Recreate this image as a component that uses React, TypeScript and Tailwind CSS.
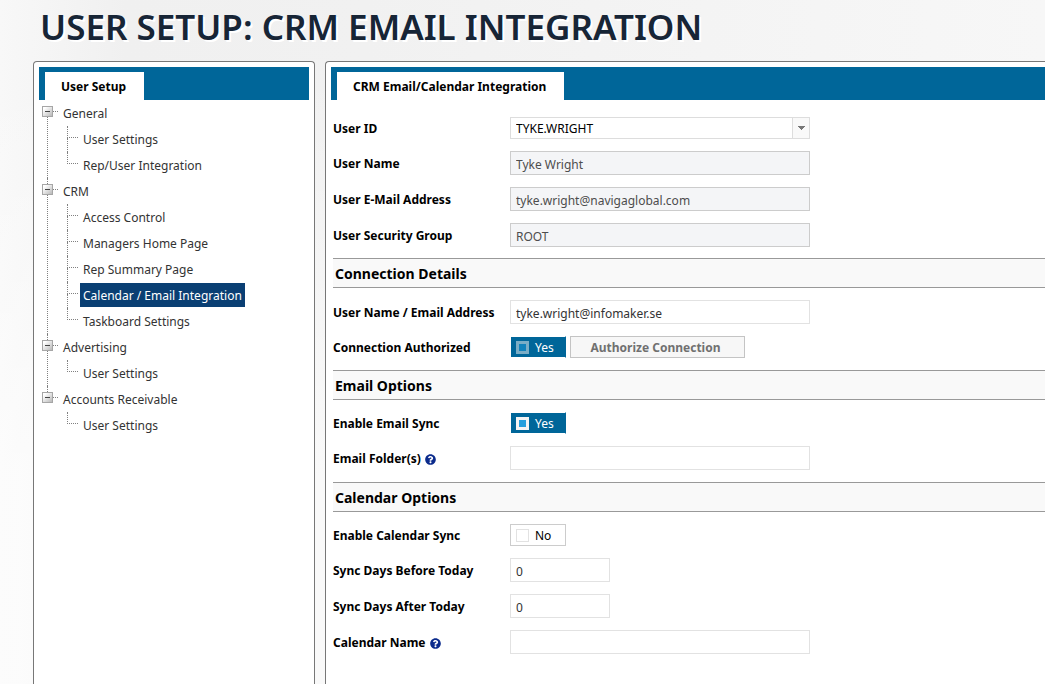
import { useId, useState } from "react";
import type { ReactNode } from "react";
import { FaQuestionCircle } from "react-icons/fa";

type TreeGroup = { label: string; items: string[] };

const GROUPS: TreeGroup[] = [
  { label: "General", items: ["User Settings", "Rep/User Integration"] },
  {
    label: "CRM",
    items: [
      "Access Control",
      "Managers Home Page",
      "Rep Summary Page",
      "Calendar / Email Integration",
      "Taskboard Settings",
    ],
  },
  { label: "Advertising", items: ["User Settings"] },
  { label: "Accounts Receivable", items: ["User Settings"] },
];

const ACTIVE_ITEM = "Calendar / Email Integration";

function TabBar({ title }: { title: string }) {
  return (
    <div className="flex h-[33px] bg-[#006699] pt-[5px] pl-1.5">
      <h2 className="flex items-center bg-white pt-0.5 pr-[18px] pl-4 text-xs font-bold text-black">{title}</h2>
    </div>
  );
}

function ToggleIcon({ open }: { open: boolean }) {
  return (
    <svg viewBox="0 0 11 11" className="block size-[11px]" shapeRendering="crispEdges" aria-hidden="true">
      <defs>
        <linearGradient id="node-face" x1="0" y1="0" x2="1" y2="1">
          <stop offset="0.2" stopColor="#ffffff" />
          <stop offset="1" stopColor="#b4b4b4" />
        </linearGradient>
      </defs>
      <rect x="0.5" y="0.5" width="10" height="10" fill="url(#node-face)" stroke="#a6a6a6" />
      <rect x="3" y="5" width="5" height="1" fill="#444444" />
      {!open && <rect x="5" y="3" width="1" height="5" fill="#444444" />}
    </svg>
  );
}

function TreeNode({ group, first, last }: { group: TreeGroup; first: boolean; last: boolean }) {
  const [open, setOpen] = useState(true);
  return (
    <li className="flex">
      <div className="flex w-4 flex-col">
        <div className={first ? "h-1.5" : "ml-[5px] h-1.5 border-l border-dotted border-[#808080]"} />
        <div className="flex items-center">
          <button
            type="button"
            aria-expanded={open}
            aria-label={`Toggle ${group.label}`}
            onClick={() => setOpen(!open)}
          >
            <ToggleIcon open={open} />
          </button>
          <span className="flex-1 border-t border-dotted border-[#808080]" />
        </div>
        {!last && <div className="ml-[5px] flex-1 border-l border-dotted border-[#808080]" />}
      </div>
      <div>
        <a href="#group" className="block h-[26px] pl-[5px] leading-7">
          {group.label}
        </a>
        {open && (
          <ul className="pl-[9px]">
            {group.items.map((item, i) => (
              <li key={item} className="flex h-[26px]">
                <div className="flex w-[11px] flex-col">
                  <div className="h-3 border-b border-l border-dotted border-[#808080]" />
                  {i < group.items.length - 1 && (
                    <div className="flex-1 border-l border-dotted border-[#808080]" />
                  )}
                </div>
                <a
                  href="#item"
                  className={
                    item === ACTIVE_ITEM
                      ? "my-px ml-0.5 bg-[#0a3f73] px-[3px] leading-[26px] text-white"
                      : "my-px ml-0.5 px-[3px] leading-[26px]"
                  }
                >
                  {item}
                </a>
              </li>
            ))}
          </ul>
        )}
      </div>
    </li>
  );
}

function Section({ title }: { title: string }) {
  return (
    <h3 className="flex h-[30px] items-center border-y border-[#999999] bg-[#f9f9f9] pt-0.5 pl-0.5 text-sm font-bold text-black">
      {title}
    </h3>
  );
}

function Row({ label, id, help, children }: { label: string; id: string; help?: boolean; children: ReactNode }) {
  return (
    <div className="flex items-center">
      <div className="flex w-[177px] shrink-0 items-center gap-1 pt-0.5 text-xs leading-5 font-bold whitespace-nowrap text-black">
        <label htmlFor={id}>{label}</label>
        {help && (
          <button type="button" aria-label={`Help for ${label}`} className="text-[#0b2b8c]">
            <FaQuestionCircle className="size-[11px]" />
          </button>
        )}
      </div>
      {children}
    </div>
  );
}

function TextRow({
  label,
  value,
  help,
  short,
  locked,
}: {
  label: string;
  value: string;
  help?: boolean;
  short?: boolean;
  locked?: boolean;
}) {
  const id = useId();
  const width = short ? "w-[100px]" : "w-[300px]";
  const tone = locked ? "border-[#cccccc] bg-[#f4f5f7] text-[#4d4d4d]" : "border-[#e2e2e2] bg-white text-[#333333]";
  return (
    <Row label={label} id={id} help={help}>
      <input
        id={id}
        type="text"
        defaultValue={value}
        readOnly={locked}
        className={`h-6 border px-[5px] pt-0.5 text-xs outline-none ${width} ${tone}`}
      />
    </Row>
  );
}

function SwitchRow({
  label,
  initial,
  disabled,
  children,
}: {
  label: string;
  initial: boolean;
  disabled?: boolean;
  children?: ReactNode;
}) {
  const id = useId();
  const [on, setOn] = useState(initial);
  return (
    <Row label={label} id={id}>
      <label
        className={
          on
            ? "flex h-[22px] w-14 items-center gap-1.5 border border-transparent border-r-[#006699] bg-[#006699] bg-clip-padding pl-[5px] text-xs text-white"
            : "flex h-[22px] w-14 items-center gap-1.5 border border-[#cccccc] bg-white pl-[5px] text-xs text-black"
        }
      >
        <input
          id={id}
          type="checkbox"
          checked={on}
          disabled={disabled}
          onChange={(e) => setOn(e.target.checked)}
          className="size-[13px] appearance-none border border-[#e2e2e2] bg-white checked:border-3 checked:border-[#f4f4f4] checked:bg-[#259fdd] disabled:opacity-50"
        />
        <span className="pt-0.5">{on ? "Yes" : "No"}</span>
      </label>
      {children}
    </Row>
  );
}

export default function App() {
  const userId = useId();
  return (
    <div className="flex min-h-screen flex-col bg-[linear-gradient(180deg,rgba(255,255,255,0)_10%,rgba(255,255,255,0.6)_70%),linear-gradient(90deg,#f8f8f8_0%,#f0f0f0_12%,#f1f1f1_35%,#f7f7f7_100%)] font-['Noto_Sans',sans-serif] text-xs text-[#333333]">
      <header className="flex h-[61px] items-center pb-2 pl-10">
        <h1 className="text-[35px] leading-none font-semibold whitespace-nowrap text-[#172536] [text-shadow:2px_2px_0_#ffffff]">
          USER SETUP: CRM EMAIL INTEGRATION
        </h1>
      </header>
      <div className="flex flex-1 gap-2.5 pl-[33px]">
        <nav className="w-[282px] shrink-0 rounded-t border border-b-0 border-[#777777] bg-white p-[5px]">
          <TabBar title="User Setup" />
          <ul className="pl-[3px]">
            {GROUPS.map((group, i) => (
              <TreeNode key={group.label} group={group} first={i === 0} last={i === GROUPS.length - 1} />
            ))}
          </ul>
        </nav>
        <main className="min-w-0 flex-1 rounded-tl border-t border-l border-[#777777] bg-white pt-[5px] pl-[5px]">
          <TabBar title="CRM Email/Calendar Integration" />
          <form className="flex flex-col gap-3 pt-[17px] pl-0.5" onSubmit={(e) => e.preventDefault()}>
            <div className="-mb-px flex flex-col gap-3">
              <Row label="User ID" id={userId}>
                <div className="relative w-[300px]">
                  <select
                    id={userId}
                    className="block h-[22px] w-full appearance-none border border-[#dddddd] bg-white pt-0.5 pr-5 pl-[5px] text-xs text-black outline-none"
                  >
                    <option>TYKE.WRIGHT</option>
                  </select>
                  <span className="pointer-events-none absolute inset-y-px right-px flex w-[17px] items-center justify-center border-l border-[#dddddd] bg-[#f9f9f9]">
                    <svg viewBox="0 0 7 4" className="h-1 w-[7px]" shapeRendering="crispEdges" aria-hidden="true">
                      <path d="M0 0h7v1h-1v1h-1v1h-1v1h-1v-1h-1v-1h-1v-1h-1z" fill="#777777" />
                    </svg>
                  </span>
                </div>
              </Row>
              <TextRow label="User Name" value="Tyke Wright" locked />
              <TextRow label="User E-Mail Address" value="tyke.wright@navigaglobal.com" locked />
              <TextRow label="User Security Group" value="ROOT" locked />
            </div>
            <Section title="Connection Details" />
            <TextRow label="User Name / Email Address" value="tyke.wright@infomaker.se" />
            <SwitchRow label="Connection Authorized" initial disabled>
              <button
                type="button"
                className="ml-1 h-[22px] w-[175px] border border-[#c4c4c4] bg-[#f7f7f7] pt-px pr-1 text-xs leading-5 font-bold text-[#707070]"
              >
                Authorize Connection
              </button>
            </SwitchRow>
            <Section title="Email Options" />
            <SwitchRow label="Enable Email Sync" initial />
            <TextRow label="Email Folder(s)" value="" help />
            <Section title="Calendar Options" />
            <SwitchRow label="Enable Calendar Sync" initial={false} />
            <TextRow label="Sync Days Before Today" value="0" short />
            <TextRow label="Sync Days After Today" value="0" short />
            <TextRow label="Calendar Name" value="" help />
          </form>
        </main>
      </div>
    </div>
  );
}
